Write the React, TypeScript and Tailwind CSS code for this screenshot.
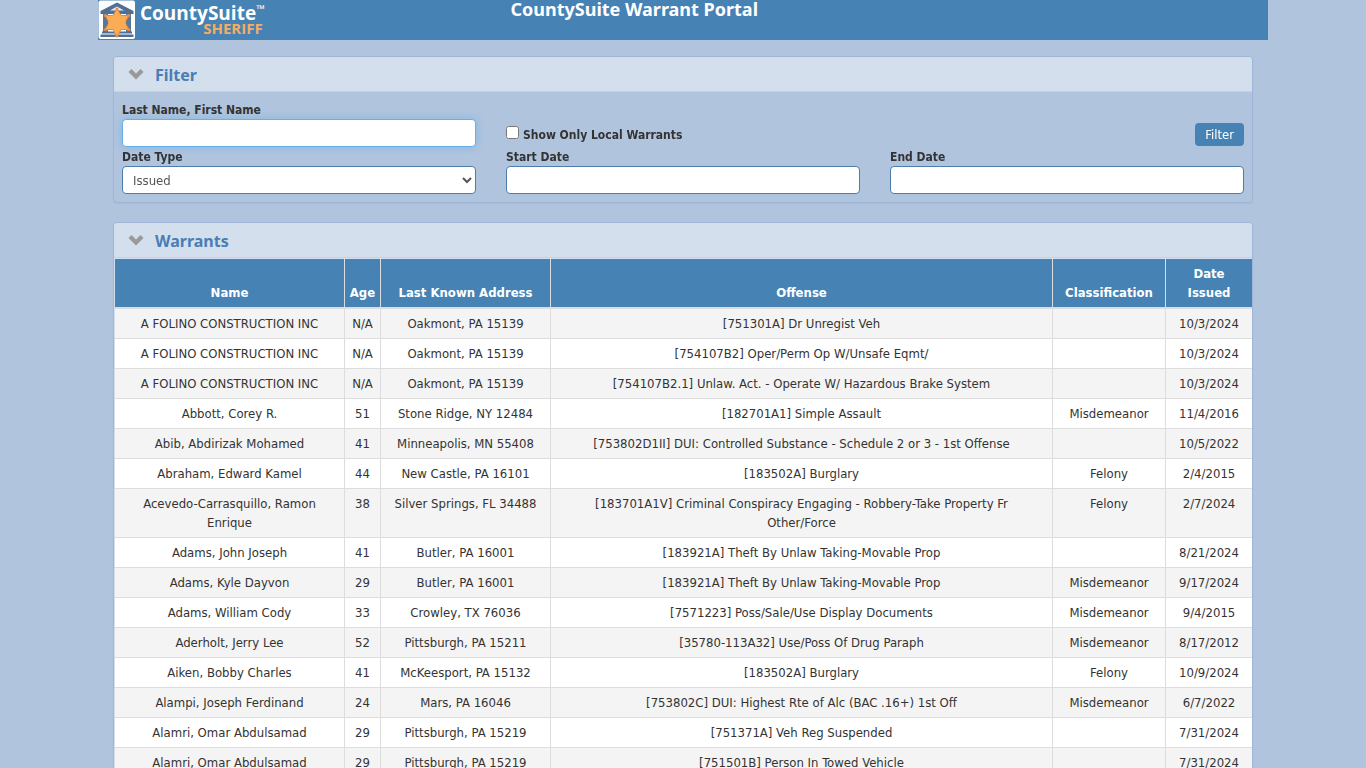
import { useState } from "react";

type Warrant = [name: string, age: string, address: string, offense: string, classification: string, issued: string];

const warrants: Warrant[] = [
  ["A FOLINO CONSTRUCTION INC", "N/A", "Oakmont, PA 15139", "[751301A] Dr Unregist Veh", "", "10/3/2024"],
  ["A FOLINO CONSTRUCTION INC", "N/A", "Oakmont, PA 15139", "[754107B2] Oper/Perm Op W/Unsafe Eqmt/", "", "10/3/2024"],
  ["A FOLINO CONSTRUCTION INC", "N/A", "Oakmont, PA 15139", "[754107B2.1] Unlaw. Act. - Operate W/ Hazardous Brake System", "", "10/3/2024"],
  ["Abbott, Corey R.", "51", "Stone Ridge, NY 12484", "[182701A1] Simple Assault", "Misdemeanor", "11/4/2016"],
  ["Abib, Abdirizak Mohamed", "41", "Minneapolis, MN 55408", "[753802D1II] DUI: Controlled Substance - Schedule 2 or 3 - 1st Offense", "", "10/5/2022"],
  ["Abraham, Edward Kamel", "44", "New Castle, PA 16101", "[183502A] Burglary", "Felony", "2/4/2015"],
  ["Acevedo-Carrasquillo, Ramon Enrique", "38", "Silver Springs, FL 34488", "[183701A1V] Criminal Conspiracy Engaging - Robbery-Take Property Fr Other/Force", "Felony", "2/7/2024"],
  ["Adams, John Joseph", "41", "Butler, PA 16001", "[183921A] Theft By Unlaw Taking-Movable Prop", "", "8/21/2024"],
  ["Adams, Kyle Dayvon", "29", "Butler, PA 16001", "[183921A] Theft By Unlaw Taking-Movable Prop", "Misdemeanor", "9/17/2024"],
  ["Adams, William Cody", "33", "Crowley, TX 76036", "[7571223] Poss/Sale/Use Display Documents", "Misdemeanor", "9/4/2015"],
  ["Aderholt, Jerry Lee", "52", "Pittsburgh, PA 15211", "[35780-113A32] Use/Poss Of Drug Paraph", "Misdemeanor", "8/17/2012"],
  ["Aiken, Bobby Charles", "41", "McKeesport, PA 15132", "[183502A] Burglary", "Felony", "10/9/2024"],
  ["Alampi, Joseph Ferdinand", "24", "Mars, PA 16046", "[753802C] DUI: Highest Rte of Alc (BAC .16+) 1st Off", "Misdemeanor", "6/7/2022"],
  ["Alamri, Omar Abdulsamad", "29", "Pittsburgh, PA 15219", "[751371A] Veh Reg Suspended", "", "7/31/2024"],
  ["Alamri, Omar Abdulsamad", "29", "Pittsburgh, PA 15219", "[751501B] Person In Towed Vehicle", "", "7/31/2024"],
];

function Logo() {
  return (
    <a href="#" className="col-span-3 flex items-start gap-1" aria-label="CountySuite Sheriff">
      <svg viewBox="0 0 38 40" className="h-10 w-[38px]" aria-hidden="true">
        <rect x="0.5" y="0.5" width="36.5" height="38.5" rx="2" fill="#fff" />
        <path d="M2.500 11 19 2.500 35.500 11V14H2.500Z" fill="#4f6f96" />
        <path d="M12 10.500 19 6.500 26 10.500Z" fill="#e6ebf2" />
        <path d="M5 14h5v18H5zM28 14h5v18h-5z" fill="#5c7698" />
        <path d="M4 31.500h30v2H4zM2.500 34.500h33v2.500H2.500z" fill="#4f6f96" />
        <path d="M19 8.500 23 15.500H31L27 22.500 31 29.500H23L19 36.500 15 29.500H7L11 22.500 7 15.500H15Z" fill="#fbac55" stroke="#e0893f" strokeWidth="1" />
        <g fill="#ee8f3c">
          <circle cx="19" cy="9" r="1.600" /><circle cx="30.500" cy="15.500" r="1.600" /><circle cx="30.500" cy="29.500" r="1.600" />
          <circle cx="19" cy="36" r="1.600" /><circle cx="7.500" cy="29.500" r="1.600" /><circle cx="7.500" cy="15.500" r="1.600" />
        </g>
      </svg>
      <span className="flex flex-col pt-1 font-['Open_Sans',sans-serif] font-bold">
        <span className="flex items-start text-[19px] leading-[18px] text-white">
          CountySuite<span className="text-[11px] leading-[10px]">™</span>
        </span>
        <span className="self-end pr-0.5 text-[15px] leading-3 text-[#f4ad65]">SHERIFF</span>
      </span>
    </a>
  );
}

function PanelHeading({ title, open, onToggle }: { title: string; open: boolean; onToggle: () => void }) {
  return (
    <h2 className="border-b border-[#c0d3ea] bg-[#d3dfed]">
      <button type="button" onClick={onToggle} aria-expanded={open} className="flex h-[34px] w-full items-center gap-[11px] px-3.5 pt-px text-base font-bold text-[#4a7db4]">
        <svg viewBox="0 0 16 12" className="mb-0.5 h-3 w-4" aria-hidden="true">
          <path d="M0.500 4 3.500 1 8 5.500 12.500 1 15.500 4 8 11.500Z" fill="#999" />
        </svg>
        {title}
      </button>
    </h2>
  );
}

const panel = "overflow-hidden rounded-sm border border-[#9fb6d8] shadow-[0_1px_1px_rgba(0,0,0,0.05)]";
const field = "block h-7 w-full rounded-sm border border-[#4f7dab] bg-white text-[13px] text-[#555] outline-none focus:border-[#66afe9] focus:shadow-[0_0_8px_rgba(102,175,233,0.6)]";
const label = "block pt-px font-['DejaVu_Sans_Condensed','Noto_Sans',sans-serif] text-xs leading-[18px] font-bold";
const th = "border-r border-b-2 border-[#ddd] px-1 pt-[5px] pb-[5px] align-bottom last:border-r-0 last:px-4";
const td = "border-r border-b border-[#ddd] px-[5px] pt-[5px] pb-[5px] align-top last:border-r-0 nth-4:px-5";

export default function App() {
  const [filterOpen, setFilterOpen] = useState(true);
  const [listOpen, setListOpen] = useState(true);
  return (
    <div className="h-screen overflow-y-auto bg-[#b0c4de] font-['Noto_Sans',sans-serif] text-[13px] leading-[19px] text-[#333] [scrollbar-width:none]">
      <div className="mx-auto max-w-[1170px]">
        <header className="grid h-10 grid-cols-12 bg-[#4682b4]">
          <Logo />
          <h1 className="col-span-5 text-center text-lg leading-[18px] font-bold text-white">CountySuite Warrant Portal</h1>
        </header>
        <main className="flex flex-col gap-[19px] px-[15px] pt-4">
          <section className={panel}>
            <PanelHeading title="Filter" open={filterOpen} onToggle={() => setFilterOpen(!filterOpen)} />
            {filterOpen && (
              <form onSubmit={(e) => e.preventDefault()} className="grid grid-cols-3 gap-x-[30px] px-2 pt-2 pb-2">
                <div>
                  <label htmlFor="name" className={label}>Last Name, First Name</label>
                  <input id="name" autoFocus className={`${field} px-2.5`} />
                </div>
                <div className="flex items-end gap-1 pb-[3px]">
                  <input id="local" type="checkbox" className="mb-[5px] size-[13px]" />
                  <label htmlFor="local" className={label}>Show Only Local Warrants</label>
                </div>
                <div className="flex items-end justify-end pb-px">
                  <button type="submit" className="h-[23px] rounded-sm bg-[#4682b4] px-2.5 font-['DejaVu_Sans_Condensed','Noto_Sans',sans-serif] text-[13px] text-white">Filter</button>
                </div>
                <div>
                  <label htmlFor="type" className={label}>Date Type</label>
                  <select id="type" className={`${field} px-1.5 font-['DejaVu_Sans_Condensed','Noto_Sans',sans-serif]`}><option>Issued</option></select>
                </div>
                <div>
                  <label htmlFor="start" className={label}>Start Date</label>
                  <input id="start" className={`${field} px-2.5`} />
                </div>
                <div>
                  <label htmlFor="end" className={label}>End Date</label>
                  <input id="end" className={`${field} px-2.5`} />
                </div>
              </form>
            )}
          </section>
          <section className={panel}>
            <PanelHeading title="Warrants" open={listOpen} onToggle={() => setListOpen(!listOpen)} />
            {listOpen && (
              <table className="w-full table-fixed border-separate border-spacing-0 border-t border-l border-[#d3dfed] text-center font-['DejaVu_Sans_Condensed','Noto_Sans',sans-serif]">
                <colgroup>
                  <col className="w-[230px]" /><col className="w-9" /><col className="w-[170px]" />
                  <col /><col className="w-[113px]" /><col className="w-[86px]" />
                </colgroup>
                <thead className="bg-[#4682b4] text-white">
                  <tr>
                    {["Name", "Age", "Last Known Address", "Offense", "Classification", "Date Issued"].map((h) => (
                      <th key={h} scope="col" className={th}>{h}</th>
                    ))}
                  </tr>
                </thead>
                <tbody>
                  {warrants.map((row, i) => (
                    <tr key={i} className="odd:bg-[#f4f4f4] even:bg-white">
                      {row.map((cell, j) => (
                        <td key={j} className={td}>{cell}</td>
                      ))}
                    </tr>
                  ))}
                </tbody>
              </table>
            )}
          </section>
        </main>
      </div>
    </div>
  );
}
